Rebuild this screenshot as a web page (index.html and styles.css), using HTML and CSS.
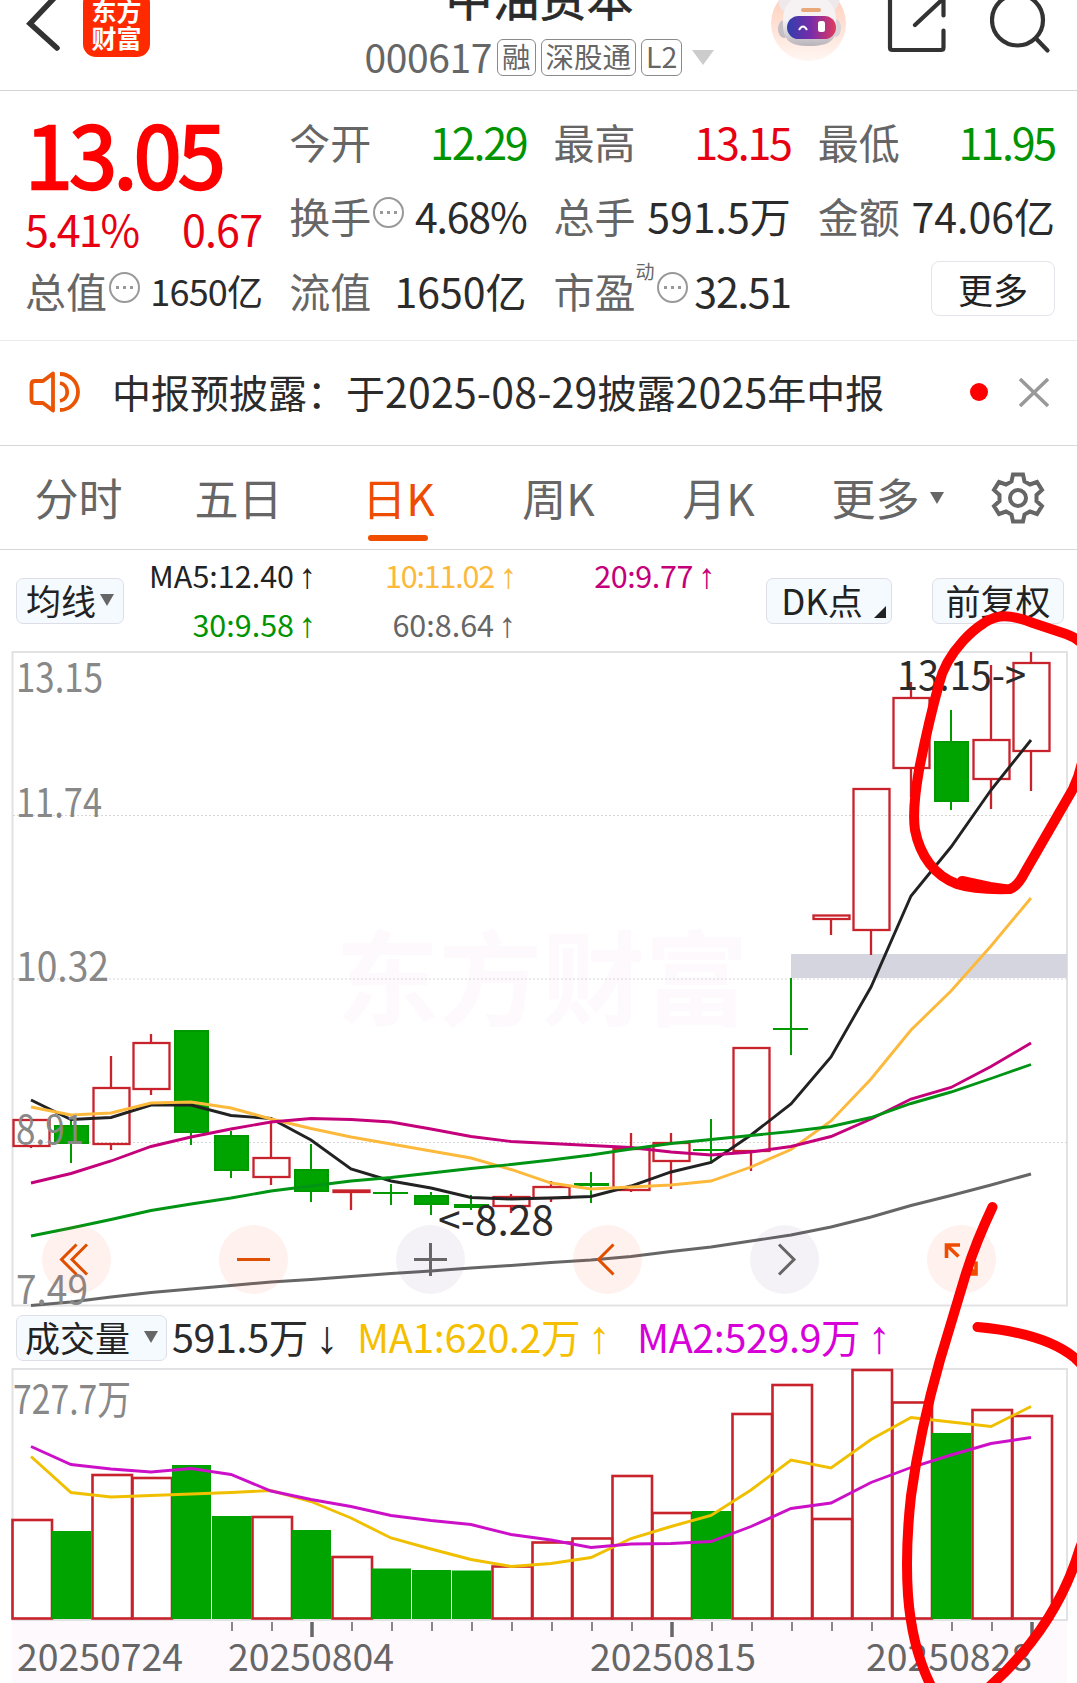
FILE: index.html
```html
<!DOCTYPE html>
<html lang="zh-CN">
<head>
  <meta charset="utf-8" />
  <title>中油资本 000617</title>
  <link rel="stylesheet" href="styles.css">
</head>
<body>
  <div id="main">
    <header class="header">
      <div class="header-left">
        <svg class="back" width="36" height="60" viewBox="0 0 36 60"><path d="M34 -6L6 23.500L33 48"/></svg>
        <div class="logo">东方<br>财富</div>
      </div>
      <div class="header-title">
        <h1>中油资本</h1>
        <div class="stock-code">
          <span class="code">000617</span>
          <span class="tag">融</span>
          <span class="tag">深股通</span>
          <span class="tag">L2</span>
          <i class="drop"></i>
        </div>
      </div>
      <div class="header-right">
        <svg width="76" height="64" viewBox="770 0 76 64">
          <defs>
            <linearGradient id="halo" x1="0" y1="0" x2="0" y2="1">
              <stop offset="0" stop-color="#ffc9b4"/>
              <stop offset="1" stop-color="#fff6f2"/>
            </linearGradient>
            <linearGradient id="head" x1="0" y1="0" x2="0" y2="1">
              <stop offset="0.5" stop-color="#f6f1f2"/>
              <stop offset="1" stop-color="#b9b4ba"/>
            </linearGradient>
            <linearGradient id="visor">
              <stop offset="0" stop-color="#2f3fae"/>
              <stop offset="0.5" stop-color="#7a2ba8"/>
              <stop offset="1" stop-color="#e23a5e"/>
            </linearGradient>
          </defs>
          <circle cx="808.5" cy="23.5" r="37.5" fill="url(#halo)"/>
          <path d="M778 -4Q778 13 790 13L800 2ZM840 -6Q840 12 828 12L818 2Z" fill="#efe8ea"/>
          <ellipse cx="784" cy="29" rx="6" ry="9" fill="#c3bfc5"/>
          <ellipse cx="836" cy="28" rx="5" ry="9" fill="#d8d3d8"/>
          <path d="M783 19C783 -14 836 -14 836 19C838 39 832 46 810 46C788 46 782 39 783 19Z" fill="url(#head)"/>
          <rect x="801" y="8" width="20" height="4" rx="2" fill="#e9a879"/>
          <rect x="787" y="16" width="49" height="23" rx="11.5" fill="url(#visor)"/>
          <path d="M799 30Q803 23 807 30" fill="none" stroke="#fff" stroke-width="2"/>
          <rect x="818" y="21" width="7" height="11" rx="2.500" fill="#fff"/>
        </svg>
        <svg class="icon-dark" width="64" height="64" viewBox="886 0 64 64"><path d="M890 -6V47.500Q890 50 892.500 50H941Q943.500 50 943.500 47.500V30.500M943.500 -6V15.500M915 25L946 -4"/></svg>
        <svg class="icon-dark" width="64" height="64" viewBox="991 0 64 64"><circle cx="1018.500" cy="20" r="25.500"/><path d="M1037 38.500L1048.500 50.500"/></svg>
      </div>
    </header>

    <section class="quote">
      <div class="col">
        <div class="price">13.05</div>
        <div class="change"><span>5.41%</span><span>0.67</span></div>
        <div class="cell small"><label>总值<i class="dots"></i></label><span>1650亿</span></div>
      </div>
      <div class="col">
        <div class="cell"><label>今开</label><span class="down num">12.29</span></div>
        <div class="cell"><label>换手<i class="dots"></i></label><span class="tight">4.68%</span></div>
        <div class="cell"><label>流值</label><span>1650亿</span></div>
      </div>
      <div class="col">
        <div class="cell"><label>最高</label><span class="up num">13.15</span></div>
        <div class="cell"><label>总手</label><span>591.5万</span></div>
        <div class="cell"><label>市盈<sup>动</sup><i class="dots"></i></label><span class="tight">32.51</span></div>
      </div>
      <div class="col">
        <div class="cell"><label>最低</label><span class="down num">11.95</span></div>
        <div class="cell"><label>金额</label><span>74.06亿</span></div>
        <div class="cell more-cell"><button class="more">更多</button></div>
      </div>
    </section>

    <section class="notice">
      <svg class="speaker" width="56" height="50" viewBox="28 368.5 56 50"><path d="M53 374L43 381.500H35Q31.500 381.500 31.500 385V400Q31.500 403.500 35 403.500H43L53 411ZM60 383.500A9.200 9.200 0 0 1 60 401.500M60 374.500A18 18 0 0 1 60 410.500"/></svg>
      <p>中报预披露：于<b>2025-08-29</b>披露<b>2025</b>年中报</p>
      <i class="dot"></i>
      <svg class="close" width="30" height="30" viewBox="0 0 30 30"><path d="M1 1L29 28M29 1L1 28"/></svg>
    </section>

    <nav class="tabs">
      <a>分时</a>
      <a>五日</a>
      <a class="active">日K</a>
      <a>周K</a>
      <a>月K</a>
      <a class="tab-more">更多<i class="tri"></i></a>
      <svg class="gear" width="54" height="56" viewBox="-27 -28 54 56"><path d="M-5 -23.500H5L6.500 -16.500L12 -13.500L19 -16L24 -8L18.500 -3V3L24 8L19 16L12 13.500L6.500 16.500L5 23.500H-5L-6.500 16.500L-12 13.500L-19 16L-24 8L-18.500 3V-3L-24 -8L-19 -16L-12 -13.500L-6.500 -16.500Z"/><circle r="8"/></svg>
    </nav>

    <section class="ma-bar">
      <button class="chip">均线<i class="tri"></i></button>
      <div class="ma-values">
        <span class="ma5">MA5:12.40<em>↑</em></span>
        <span class="ma10">10:11.02<em>↑</em></span>
        <span class="ma20">20:9.77<em>↑</em></span>
        <span class="ma30">30:9.58<em>↑</em></span>
        <span class="ma60">60:8.64<em>↑</em></span>
      </div>
      <button class="chip dk">DK点<i class="corner"></i></button>
      <button class="chip">前复权</button>
    </section>

    <svg id="kline" width="1077" height="662" viewBox="0 650 1077 662"></svg>

    <section class="vol-bar">
      <button class="chip">成交量<i class="tri"></i></button>
      <span class="vol">591.5万<em>↓</em></span>
      <span class="vol vol1">MA1:620.2万<em>↑</em></span>
      <span class="vol vol2">MA2:529.9万<em>↑</em></span>
    </section>

    <svg id="volume" width="1077" height="317" viewBox="0 1366 1077 317"></svg>

    <!-- hand drawn marks over both charts -->
    <svg class="marks" width="1077" height="1683" viewBox="0 0 1077 1683">
      <path d="M1086 648Q1078 638 1066 634L1033 623C1010 614 997 614 984 623Q973 630 963 641Q944 662 939 684Q928 724 919 770Q912 810 915 830C920 856 935 876 957 884Q975 890 1010 889Q1018 886 1025 872L1073 789Q1082 770 1084 750"/>
      <path d="M962 881L990 887L1004 889"/>
      <path d="M992.500 1207Q974 1246 964 1280L940 1360Q920 1430 911 1496Q905 1550 908 1595Q912 1650 933 1690"/>
      <path d="M977.500 1327Q1045 1333 1075 1358C1120 1400 1120 1450 1080 1548Q1056 1628 988 1688"/>
    </svg>
  </div>
  <script src="chart.js"></script>
</body>
</html>
```
FILE: styles.css
```css
* {
  box-sizing: border-box;
}
body {
  margin: 0;
  background: white;
  color: #2b2b2b;
  font-family: "Noto Sans CJK SC", "Noto Sans", sans-serif;
}
#main {
  position: relative;
  width: 1077px;
  height: 1683px;
  overflow: hidden;
}
svg {
  display: block;
  flex: none;
}
i, em, b {
  font-style: normal;
  font-weight: normal;
}
button {
  padding: 0;
  font-family: inherit;
  color: #222222;
}

/* header */
.header {
  display: grid;
  grid-template-columns: 332px 1fr 330px;
  height: 91px;
  overflow: hidden;
  border-bottom: 1px solid #d4d4d4;
}
.header-left {
  display: flex;
  padding-left: 24px;
}
.back {
  fill: none;
  stroke: #333333;
  stroke-width: 5.5;
  stroke-linecap: round;
  margin-right: 23px;
}
.logo {
  width: 67px;
  height: 67px;
  margin-top: -10px;
  padding-top: 7px;
  border-radius: 13px;
  background: #ff2a00;
  color: white;
  font-size: 25px;
  font-weight: bold;
  line-height: 27px;
  text-align: center;
}
.header-title {
  display: flex;
  flex-direction: column;
  align-items: center;
}
.header-title h1 {
  margin: -38px 0 0;
  font-size: 47px;
  font-weight: 400;
  line-height: 68px;
  -webkit-text-stroke: 0.6px #222222;
}
.stock-code {
  display: flex;
  align-items: center;
  height: 55px;
  gap: 5px;
  color: #666666;
}
.stock-code .code {
  font-size: 39px;
  line-height: 50px;
  letter-spacing: -0.4px;
  margin-top: -4px;
}
.tag {
  height: 37px;
  padding: 0 4px;
  border: 1.5px solid #8a8a8a;
  border-radius: 6px;
  font-size: 28.500px;
  line-height: 32px;
}
.drop {
  margin-left: 5px;
  border: 11px solid transparent;
  border-top: 15px solid #cccccc;
  border-bottom: 0;
}
.header-right {
  display: flex;
  padding-left: 23px;
  gap: 40px;
}
.icon-dark {
  fill: none;
  stroke: #333333;
  stroke-width: 4.2;
  stroke-linecap: round;
}

/* quote */
.quote {
  display: grid;
  grid-template-columns: repeat(4, 1fr);
  gap: 27px;
  height: 250px;
  padding: 12.5px 22px 0 25px;
  border-bottom: 1px solid #eaeaea;
}
.price {
  height: 94px;
  color: #ff0000;
  font-size: 86px;
  line-height: 95px;
  letter-spacing: -3.5px;
  white-space: nowrap;
  -webkit-text-stroke: 2.4px #ff0000;
}
.change {
  display: flex;
  justify-content: space-between;
  height: 55px;
  padding-top: 6px;
  color: #e60012;
  font-size: 43px;
  line-height: 49px;
  letter-spacing: -2px;
}
.change span:last-child {
  letter-spacing: -0.8px;
}
.cell {
  display: flex;
  justify-content: space-between;
  align-items: center;
  height: 74.5px;
  font-size: 41px;
  line-height: 74px;
  white-space: nowrap;
}
.cell label {
  display: flex;
  align-items: center;
  font-size: 41px;
  color: #666666;
}
.cell .num {
  font-size: 43px;
  letter-spacing: -1.8px;
}
.cell .up, .cell:first-child .down {
  letter-spacing: -2.2px;
}
.cell .tight {
  letter-spacing: -1.2px;
}
.cell.small span {
  font-size: 36px;
  letter-spacing: -0.8px;
}
.cell sup {
  align-self: flex-start;
  font-size: 19px;
  line-height: 36px;
}
.dots {
  width: 31px;
  height: 31px;
  margin: -5px 0 0 2px;
  border: 2px solid #999999;
  border-radius: 50%;
  background: radial-gradient(circle 2px, #999999 90%, transparent) 3px 0 / 7px 27px no-repeat, radial-gradient(circle 2px, #999999 90%, transparent) 10px 0 / 7px 27px no-repeat, radial-gradient(circle 2px, #999999 90%, transparent) 17px 0 / 7px 27px no-repeat;
}
.up {
  color: #e60012;
}
.down {
  color: #009400;
}
.more-cell {
  justify-content: flex-end;
}
.more {
  width: 124px;
  height: 55px;
  margin-top: -2px;
  border: 1.5px solid #e4e4ea;
  border-radius: 8px;
  background: white;
  font-size: 35px;
  line-height: 48px;
}

/* notice */
.notice {
  display: flex;
  align-items: center;
  height: 105px;
  padding: 0 28px;
  border-bottom: 1px solid #d8d8d8;
}
.notice p {
  flex: 1;
  margin: -5px 0 0 28px;
  font-size: 39px;
  line-height: 60px;
  white-space: nowrap;
}
.notice b {
  font-size: 41px;
  letter-spacing: 0.2px;
}
.speaker {
  fill: none;
  stroke: #ea5504;
  stroke-width: 3.8;
  stroke-linejoin: round;
}
.dot {
  width: 18px;
  height: 18px;
  margin: -2px 31px 0 0;
  border-radius: 50%;
  background: #ff0000;
}
.close {
  margin-top: -1px;
  stroke: #999999;
  stroke-width: 3.5;
}

/* tabs */
.tabs {
  display: flex;
  align-items: center;
  height: 104px;
  border-bottom: 1px solid #d8d8d8;
}
.tabs a {
  position: relative;
  width: 160px;
  height: 103px;
  padding-right: 3px;
  color: #666666;
  font-size: 44px;
  line-height: 103px;
  text-align: center;
}
.tabs .active {
  color: #ee4c00;
}
.tabs .active::after {
  content: '';
  position: absolute;
  left: 48px;
  bottom: 8px;
  width: 60px;
  height: 6px;
  border-radius: 4px;
  background: #f04d00;
}
.tabs .tab-more {
  width: 178px;
}
.tri {
  display: inline-block;
  border: 7.5px solid transparent;
  border-top: 12px solid #666666;
  border-bottom: 0;
}
.tab-more .tri {
  margin-left: 10px;
  vertical-align: 12px;
}
.gear {
  margin-left: 13px;
  fill: none;
  stroke: #666666;
  stroke-width: 4;
}

/* indicator bars */
.chip {
  display: flex;
  align-items: center;
  justify-content: center;
  flex: none;
  height: 46px;
  padding-bottom: 3px;
  border: 1.5px solid #dedee8;
  border-radius: 7px;
  background: #f5faff;
  font-size: 35px;
  line-height: 38px;
}
.ma-bar {
  display: flex;
  height: 100px;
  padding: 28px 13px 0 16px;
}
.ma-bar .chip {
  width: 108px;
}
.ma-bar .chip .tri {
  margin-left: 4px;
}
.ma-values {
  display: grid;
  grid-template-columns: 192px 200px 199px;
  grid-auto-rows: 49px;
  flex: 1;
  margin-top: -30px;
  font-size: 30.500px;
  line-height: 55px;
  text-align: right;
}
.ma-values em {
  display: inline-block;
  width: 22px;
  font-family: "Liberation Sans", sans-serif;
  font-size: 35px;
  line-height: 30px;
  text-align: right;
}
.ma5 { color: #222222; }
.ma10 { color: #fcb93c; letter-spacing: -1.2px; }
.ma20 { color: #c4007a; letter-spacing: -0.4px; }
.ma30 { color: #009400; }
.ma60 { color: #666666; }
.ma-bar .dk {
  position: relative;
  width: 126px;
  margin-right: 40px;
  padding-right: 14px;
}
.ma-bar .dk + .chip {
  width: 132px;
}
.corner {
  position: absolute;
  right: 5px;
  bottom: 5px;
  border-left: 12px solid transparent;
  border-bottom: 12px solid #222222;
}
.vol-bar {
  display: flex;
  height: 54px;
  padding: 3px 0 0 16px;
}
.vol-bar .chip {
  width: 151px;
}
.vol-bar .tri {
  margin-left: 14px;
}
.vol {
  width: 185px;
  margin-left: 5px;
  font-size: 39.500px;
  line-height: 41px;
  letter-spacing: -0.4px;
  white-space: nowrap;
}
.vol em {
  display: inline-block;
  width: 30px;
  font-family: "Liberation Sans", sans-serif;
  font-size: 46px;
  line-height: 30px;
  text-align: right;
}
.vol1 {
  width: 280px;
  margin-left: 0;
  color: #f5bf00;
}
.vol2 {
  margin-left: 0;
  color: #d800d8;
}

/* charts */
.frame {
  fill: none;
  stroke: #e2e2e4;
  stroke-width: 2;
}
.grid {
  stroke: #d6d6d6;
  stroke-dasharray: 2 2;
}
.gap {
  fill: #d5d5df;
}
.watermark {
  fill: #fdf9fd;
  font-size: 103px;
  font-weight: bold;
}
.rise {
  fill: none;
  stroke: #c8232c;
  stroke-width: 2.3;
}
.fall {
  fill: #00a400;
  stroke: #009a00;
  stroke-width: 2;
}
.bar-rise {
  fill: none;
  stroke: #c8232c;
  stroke-width: 2.6;
}
.bar-fall {
  fill: #00a400;
}
.line {
  fill: none;
  stroke-width: 2.9;
}
.axis {
  fill: #888888;
  font-size: 40px;
}
.tip {
  fill: #2b2b2b;
  font-size: 40px;
}
.date {
  fill: #666666;
  font-size: 37px;
}
.strip {
  fill: #fdf9fd;
}
.tick {
  stroke: #888888;
  stroke-width: 2;
}
.major {
  stroke: #666666;
  stroke-width: 3.5;
}
.btn-warm {
  fill: rgba(255, 80, 20, 0.08);
}
.btn-cool {
  fill: rgba(90, 40, 120, 0.06);
}
.glyph {
  fill: none;
  stroke: #e04e00;
  stroke-width: 3;
}
.glyph-bold {
  stroke: #ee4c00;
  stroke-width: 3.6;
}
.glyph-off {
  fill: none;
  stroke: #666666;
  stroke-width: 3;
}
.marks {
  position: absolute;
  left: 0;
  top: 0;
  fill: none;
  stroke: #ff0000;
  stroke-width: 10;
  stroke-linecap: round;
  stroke-linejoin: round;
  pointer-events: none;
}
```
FILE: chart.js
```js
// each candle: [rise, body top, body bottom, high, low]
const candles = [
  [1, 1120, 1146, 1120, 1148], [0, 1126, 1143, 1120, 1163], [1, 1088, 1144, 1056, 1150],
  [1, 1043, 1089, 1034, 1095], [0, 1031, 1132, 1031, 1145], [0, 1136, 1170, 1131, 1178],
  [1, 1158, 1177, 1123, 1185], [0, 1170, 1191, 1144, 1202], [1, 1190.5, 1192, 1191, 1210],
  [0, 1193, 1193, 1184, 1205], [0, 1196, 1204, 1192, 1215], [0, 1205, 1207, 1195, 1210],
  [1, 1197, 1206, 1194, 1213], [1, 1187, 1198, 1181, 1202], [0, 1184, 1185, 1172, 1203],
  [1, 1149, 1190, 1133, 1192], [1, 1143, 1161, 1133, 1189], [0, 1150, 1150, 1119, 1162],
  [1, 1048, 1151, 1048, 1171], [0, 1029, 1029, 978, 1055], [1, 915.5, 919, 916, 935],
  [1, 789, 930, 789, 955], [1, 698, 768, 682, 797], [0, 742, 801, 710, 810],
  [1, 740, 779, 665, 809], [1, 663, 751, 652, 791]
];
const averages = {
  '#666666': [1305.5, 1302, 1297, 1292.5, 1289, 1285.5, 1282, 1279.5, 1276.5, 1273.5, 1271, 1268, 1265.5, 1262.5, 1260, 1256.5, 1251.5, 1247, 1241, 1235, 1227, 1217, 1205.5, 1195.5, 1185, 1174],
  '#222222': [1100, 1119.5, 1117.5, 1105, 1105, 1115.5, 1118.5, 1140, 1169, 1181, 1188, 1197.5, 1199, 1198, 1196.5, 1186, 1172, 1162.5, 1135, 1104, 1057, 987, 896, 847, 790, 740],
  '#fcb93c': [1107, 1115, 1113, 1103, 1102, 1108, 1119, 1128.5, 1137, 1144, 1151, 1158, 1169.5, 1183, 1189, 1187, 1185, 1181, 1167, 1149.5, 1121, 1079, 1030, 991, 946, 898],
  '#c4007a': [1183, 1173.5, 1161, 1146.5, 1137, 1129, 1122, 1118.5, 1119.5, 1122, 1129, 1136.5, 1141.5, 1143.5, 1145.5, 1147.5, 1152, 1155, 1152, 1146.5, 1136.5, 1119, 1099, 1087.5, 1066.5, 1043],
  '#009414': [1236, 1228, 1219.5, 1210.5, 1204, 1198, 1191, 1186, 1181, 1177.5, 1173, 1168.5, 1164.5, 1160, 1155, 1149, 1143.5, 1139.5, 1135.5, 1131.5, 1126.5, 1117.5, 1103.5, 1092, 1078.5, 1064.5]
};
// [rise, top]
const volumes = [
  [1, 1520], [0, 1531], [1, 1475], [1, 1478], [0, 1465], [0, 1516], [1, 1517], [0, 1530], [1, 1557],
  [0, 1568.5], [0, 1570], [0, 1570.5], [1, 1566.5], [1, 1542.5], [1, 1538.5], [1, 1476], [1, 1513], [0, 1511],
  [1, 1414], [1, 1385], [1, 1519], [1, 1370], [1, 1402.5], [0, 1433], [1, 1410], [1, 1416]
];
const volumeAverages = {
  '#f0bf00': [1456.5, 1492.5, 1497, 1495.5, 1494, 1492.5, 1490.5, 1501.5, 1518, 1538, 1549, 1559.5, 1566.5, 1563.5, 1557.5, 1538.5, 1526.5, 1515.5, 1490, 1460, 1468, 1439.5, 1417.5, 1422, 1426.5, 1406.5],
  '#cc10c8': [1446.5, 1464.5, 1469, 1472, 1468.5, 1474.5, 1491, 1499.5, 1506.5, 1515.5, 1520.5, 1524.5, 1534.5, 1540, 1547.5, 1544, 1543.5, 1541.5, 1526.5, 1508.5, 1503, 1482.5, 1467.5, 1455, 1443.5, 1437.5]
};

const center = i => 31 + 40 * i;
const text = (cls, x, y, width, str) =>
  `<text class="${cls}" x="${x}" y="${y}" textLength="${width}" lengthAdjust="spacingAndGlyphs">${str.replace('<', '&lt;')}</text>`;
const lines = series => Object.keys(series).map(color =>
  `<polyline class="line" stroke="${color}" points="${series[color].map((y, i) => center(i) + ',' + y).join(' ')}"/>`).join('');

function drawKline() {
  let out = text('watermark', 336, 1018, 412, '东方财富');
  out += '<rect class="frame" x="12.5" y="652" width="1054.5" height="653.5"/>';
  [815.5, 979, 1142.5].forEach(y => out += `<path class="grid" d="M13 ${y}H1067"/>`);
  out += '<rect class="gap" x="791" y="954" width="276" height="24"/>';
  candles.forEach(([rise, top, bottom, high, low], i) => {
    let x = center(i);
    out += `<g class="${rise ? 'rise' : 'fall'}">`;
    out += `<path d="M${x} ${high}V${top}M${x} ${bottom}V${low}"/>`;
    if (top === bottom) out += `<path d="M${x - 18} ${top}H${x + 17}"/>`;
    else out += `<rect x="${x - (rise ? 17.5 : 16)}" y="${top}" width="${rise ? 36 : 33}" height="${bottom - top}"/>`;
    out += '</g>';
  });
  out += lines(averages);
  [['13.15', 692, 87], ['11.74', 817, 86], ['10.32', 981, 93], ['8.91', 1144, 68], ['7.49', 1304, 72]]
    .forEach(([label, y, w]) => out += text('axis', 16, y, w, label));
  out += text('tip', 438, 1235, 116, '<-8.28');
  out += text('tip', 897, 690, 129, '13.15->');
  [76.5, 253.5, 430.5, 607.5, 784.5, 961.5].forEach((x, i) =>
    out += `<circle class="${i === 2 || i === 4 ? 'btn-cool' : 'btn-warm'}" cx="${x}" cy="1259.5" r="34.5"/>`);
  out += '<path class="glyph" d="M76.500 1244.500L61.500 1259.500L76.500 1274.500M87 1244.500L72 1259.500L87 1274.500"/>';
  out += '<path class="glyph" d="M237 1259.500H270M613.500 1244.500L598.500 1259.500L613.500 1274.500"/>';
  out += '<path class="glyph-off" d="M414 1259.500H447M430.500 1243V1276M779 1244.500L794 1259.500L779 1274.500"/>';
  out += '<path class="glyph glyph-bold" d="M946.500 1258V1245H960M947 1245.500L958.500 1256.500M963.500 1274H976V1261.500M976 1274L965 1263"/>';
  document.getElementById('kline').innerHTML = out;
}

function drawVolume() {
  let out = '<rect class="strip" x="12" y="1621" width="1055" height="62"/>';
  out += '<rect class="frame" x="12.5" y="1369" width="1054.5" height="251"/>';
  volumes.forEach(([rise, top], i) => {
    let x = 12 + 40 * i;
    out += rise
      ? `<rect class="bar-rise" x="${x + 0.5}" y="${top}" width="39.5" height="${1618.5 - top}"/>`
      : `<rect class="bar-fall" x="${x}" y="${top}" width="39" height="${1619 - top}"/>`;
  });
  out += lines(volumeAverages);
  for (let i = 5; i < 26; i++) {
    let major = (i - 7) % 9 === 0;
    out += `<path class="tick ${major ? 'major' : ''}" d="M${32 + 40 * i} 1622V${major ? 1637 : 1631}"/>`;
  }
  out += text('axis', 13, 1414, 118, '727.7万');
  [['20250724', 17], ['20250804', 228], ['20250815', 590], ['20250828', 866]]
    .forEach(([label, x]) => out += text('date', x, 1671, 166, label));
  document.getElementById('volume').innerHTML = out;
}

drawKline();
drawVolume();
```
